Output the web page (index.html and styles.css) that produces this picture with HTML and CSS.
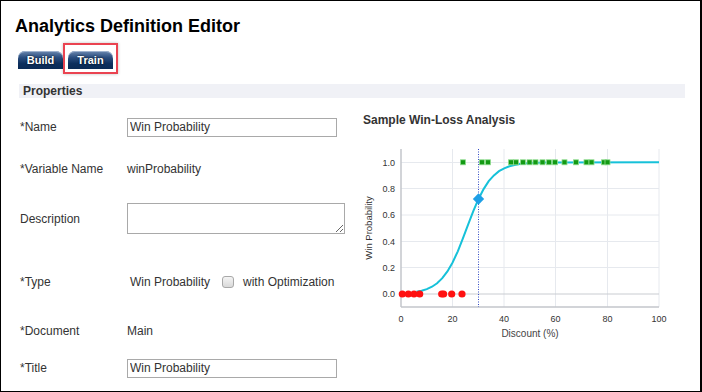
FILE: index.html
```html
<!DOCTYPE html>
<html lang="en">
<head>
    <meta charset="utf-8">
    <title>Analytics Definition Editor</title>
    <link rel="stylesheet" href="styles.css">
</head>
<body>
<div class="frame">
    <h1>Analytics Definition Editor</h1>

    <div class="tabs">
        <span class="tab">Build</span>
        <span class="tab">Train</span>
        <span class="highlight"></span>
    </div>

    <div class="section-bar">Properties</div>

    <div class="content">
        <div class="form">
            <div class="row row-name">
                <label>*Name</label>
                <input class="field" type="text" value="Win Probability">
            </div>
            <div class="row row-var">
                <label>*Variable Name</label>
                <span>winProbability</span>
            </div>
            <div class="row row-desc">
                <label>Description</label>
                <textarea class="field area"></textarea>
            </div>
            <div class="row row-type">
                <label>*Type</label>
                <span class="type-value">Win Probability</span>
                <input class="check" type="checkbox">
                <span>with Optimization</span>
            </div>
            <div class="row row-doc">
                <label>*Document</label>
                <span>Main</span>
            </div>
            <div class="row row-title">
                <label>*Title</label>
                <input class="field" type="text" value="Win Probability">
            </div>
        </div>

        <div class="chart-panel">
            <div class="chart-title">Sample Win-Loss Analysis</div>
            <svg class="chart" width="340" height="225" viewBox="355 127 340 225">
                <!-- grid -->
                <g stroke="#e6e9ee" stroke-width="1">
                    <line x1="401" y1="162.5" x2="659" y2="162.5"/>
                    <line x1="401" y1="188.5" x2="659" y2="188.5"/>
                    <line x1="401" y1="215" x2="659" y2="215"/>
                    <line x1="401" y1="241.5" x2="659" y2="241.5"/>
                    <line x1="401" y1="267.5" x2="659" y2="267.5"/>
                    <line x1="452.5" y1="149" x2="452.5" y2="307"/>
                    <line x1="504" y1="149" x2="504" y2="307"/>
                    <line x1="555.5" y1="149" x2="555.5" y2="307"/>
                    <line x1="607.5" y1="149" x2="607.5" y2="307"/>
                    <line x1="659" y1="149" x2="659" y2="307"/>
                </g>
                <line x1="401" y1="294" x2="659" y2="294" stroke="#c9ccd1"/>
                <line x1="401" y1="307" x2="659" y2="307" stroke="#c3c6cb" stroke-width="1.5"/>
                <line x1="401" y1="149" x2="401" y2="307" stroke="#c3c6cb" stroke-width="1.5"/>

                <!-- axis labels -->
                <g font-size="9" fill="#333" text-anchor="end">
                    <text x="395" y="165.5">1.0</text>
                    <text x="395" y="191.5">0.8</text>
                    <text x="395" y="218">0.6</text>
                    <text x="395" y="244.5">0.4</text>
                    <text x="395" y="270.5">0.2</text>
                    <text x="395" y="297">0.0</text>
                </g>
                <g font-size="9" fill="#333" text-anchor="middle">
                    <text x="401" y="322">0</text>
                    <text x="452.5" y="322">20</text>
                    <text x="504" y="322">40</text>
                    <text x="555.5" y="322">60</text>
                    <text x="607.5" y="322">80</text>
                    <text x="659" y="322">100</text>
                </g>
                <text x="530" y="337" font-size="10" fill="#444" text-anchor="middle">Discount (%)</text>
                <text x="0" y="0" font-size="9.5" fill="#333" text-anchor="middle"
                      transform="translate(372 228) rotate(-90)">Win Probability</text>

                <!-- threshold -->
                <line x1="478.5" y1="149" x2="478.5" y2="307" stroke="#3149c4" stroke-width="1"
                      stroke-dasharray="1 1.5"/>

                <!-- fitted curve -->
                <path fill="none" stroke="#16c1d9" stroke-width="2"
                      d="M416.5 291.8 L421.6 290.8 L426.8 289.1 L432 286.7 L437.1 283.2 L442.3 278.2
                         L447.4 271.4 L452.6 262.5 L457.8 251.3 L462.9 238.4 L468.1 224.7 L473.2 211.3
                         L478.4 199.2 L483.6 189.1 L488.7 181.2 L493.9 175.4 L499 171.2 L504.2 168.3
                         L509.4 166.3 L514.5 165 L519.7 164.1 L530 163.1 L545.5 162.5 L659 162.3"/>

                <!-- wins -->
                <g fill="#139a13" stroke="#8fdc8f" stroke-width="0.8">
                    <rect x="460.5" y="159.8" width="5" height="5"/>
                    <rect x="479.5" y="159.8" width="5" height="5"/>
                    <rect x="485.5" y="159.8" width="5" height="5"/>
                    <rect x="508.5" y="159.8" width="5" height="5"/>
                    <rect x="513.5" y="159.8" width="5" height="5"/>
                    <rect x="520.5" y="159.8" width="5" height="5"/>
                    <rect x="527" y="159.8" width="5" height="5"/>
                    <rect x="533" y="159.8" width="5" height="5"/>
                    <rect x="540" y="159.8" width="5" height="5"/>
                    <rect x="546.5" y="159.8" width="5" height="5"/>
                    <rect x="552.5" y="159.8" width="5" height="5"/>
                    <rect x="562" y="159.8" width="5" height="5"/>
                    <rect x="573.5" y="159.8" width="5" height="5"/>
                    <rect x="584" y="159.8" width="5" height="5"/>
                    <rect x="589" y="159.8" width="5" height="5"/>
                    <rect x="601.5" y="159.8" width="5" height="5"/>
                    <rect x="605" y="159.8" width="5" height="5"/>
                </g>

                <!-- losses -->
                <g fill="#ff1111">
                    <circle cx="402.3" cy="294" r="3.6"/>
                    <circle cx="408.3" cy="294" r="3.6"/>
                    <circle cx="414" cy="294" r="3.6"/>
                    <circle cx="419.7" cy="294" r="3.6"/>
                    <circle cx="441.7" cy="294" r="3.6"/>
                    <circle cx="443.6" cy="294" r="3.6"/>
                    <circle cx="451.7" cy="294" r="3.6"/>
                    <circle cx="462" cy="294" r="3.6"/>
                </g>

                <!-- current point -->
                <rect x="474.5" y="195" width="8" height="8" fill="#1e9fe6"
                      transform="rotate(45 478.5 199)"/>
            </svg>
        </div>
    </div>
</div>
</body>
</html>
```

FILE: styles.css
```css
body {
    margin: 0;
    font-family: "Liberation Sans", Arial, sans-serif;
    color: #333;
}

.frame {
    position: relative;
    width: 702px;
    height: 392px;
    box-sizing: border-box;
    border: 1px solid #000;
    border-right-width: 2px;
    background: #fff;
    overflow: hidden;
    padding-top: 14px;
}

h1 {
    margin: 0 0 0 14px;
    font-size: 18px;
    line-height: 22px;
    font-weight: bold;
    color: #000;
}

.tabs {
    position: relative;
    display: flex;
    gap: 5px;
    margin: 14px 0 0 17px;
}

.tab {
    width: 45px;
    height: 18px;
    line-height: 19px;
    text-align: center;
    color: #fff;
    font-size: 11px;
    font-weight: bold;
    text-shadow: 0 0 2px #000;
    border-radius: 7px 7px 0 0;
    background: linear-gradient(#6d89b0 0%, #2c4f80 35%, #0d2f5d 70%, #0a2a55 100%);
    box-shadow: inset 0 1px 0 #9fb3cf;
}

/* annotation around the Train tab */
.highlight {
    position: absolute;
    left: 45px;
    top: -8px;
    width: 51px;
    height: 27px;
    border: 2.5px solid #ea4350;
    box-shadow: 0 0 3px rgba(0, 0, 0, 0.25);
}

.section-bar {
    margin: 15px 0 0 18px;
    width: 662px;
    height: 14px;
    padding-left: 4px;
    background: #f0f1f6;
    font-size: 12px;
    line-height: 14px;
    font-weight: bold;
}

.content {
    display: flex;
}

.form {
    width: 335px;
    padding-left: 19px;
    font-size: 12px;
}

.row {
    display: flex;
    align-items: center;
    height: 20px;
}

.row label {
    width: 107px;
    flex: none;
}

.row-name { margin-top: 19px; }
.row-var { margin-top: 22px; }
.row-desc { margin-top: 24px; height: 31px; }
.row-type { margin-top: 38px; }
.row-doc { margin-top: 29px; }
.row-title { margin-top: 17px; }

.field {
    box-sizing: border-box;
    width: 210px;
    height: 19px;
    margin: 0;
    padding: 0 2px;
    border: 1px solid #a9a9a9;
    font-family: "Liberation Sans", Arial, sans-serif;
    font-size: 12px;
    color: #333;
}

.area {
    width: 218px;
    height: 31px;
    resize: both;
}

.type-value {
    margin-left: 3px;
}

.check {
    appearance: none;
    -webkit-appearance: none;
    flex: none;
    width: 12px;
    height: 12px;
    margin: 0 9px 0 12px;
    border: 1px solid #a8a8a8;
    border-radius: 3px;
    background: linear-gradient(#f4f4f4, #d9d9d9);
}

.chart-panel {
    flex: 1;
}

.chart-title {
    margin: 15px 0 0 8px;
    font-size: 12px;
    line-height: 14px;
    font-weight: bold;
}

.chart {
    display: block;
    font-family: "Liberation Sans", Arial, sans-serif;
}
```
